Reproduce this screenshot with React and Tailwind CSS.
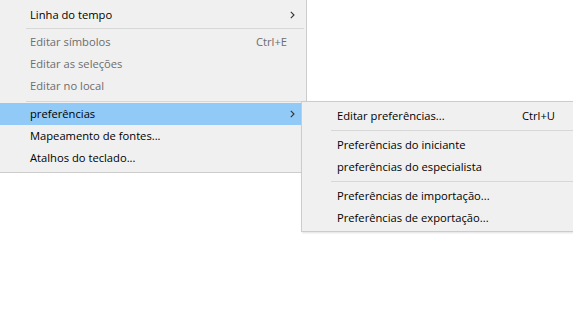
import React from "react";

const Chevron = () => (
  <svg width="5" height="8" viewBox="0 0 5 8" className="shrink-0">
    <path d="M0.8 0.8 L4 4 L0.8 7.2" fill="none" stroke="#333" strokeWidth="1.1" />
  </svg>
);

const Row = ({ label, shortcut, arrow, disabled, active }) => (
  <div
    className={`flex items-center h-[22px] pl-[30px] pr-[11px] ${active ? "bg-[#91c9f7]" : ""} ${disabled ? "text-[#6d6d6d]" : "text-black"}`}
  >
    <span className="flex-1 whitespace-nowrap">{label}</span>
    {shortcut && <span className="whitespace-nowrap mr-[8px]">{shortcut}</span>}
    {arrow && <Chevron />}
  </div>
);

const SubRow = ({ label, shortcut }) => (
  <div className="flex items-center h-[22px] pl-[35px] pr-[35px] text-black">
    <span className="flex-1 whitespace-nowrap">{label}</span>
    {shortcut && <span className="whitespace-nowrap">{shortcut}</span>}
  </div>
);

export default function App() {
  return (
    <div
      className="relative w-[573px] h-[320px] bg-white overflow-hidden text-[11.2px] leading-none"
      style={{ fontFamily: '"Open Sans", "Noto Sans", sans-serif' }}
    >
      <div className="w-[307px] bg-[#f0f0f0] border-r border-b border-[#cccccc] pt-[4px] pb-[3px]">
        <Row label="Linha do tempo" arrow />
        <div className="ml-[26px] mr-[2px] h-px bg-[#d7d7d7] mt-[2px] mb-[2px]" />
        <Row label="Editar símbolos" shortcut="Ctrl+E" disabled />
        <Row label="Editar as seleções" disabled />
        <Row label="Editar no local" disabled />
        <div className="ml-[26px] mr-[2px] h-px bg-[#d7d7d7] mt-[4px] mb-[1px]" />
        <Row label="preferências" arrow active />
        <Row label="Mapeamento de fontes..." />
        <Row label="Atalhos do teclado..." />
      </div>

      <div className="absolute left-[301px] top-[101px] w-[290px] bg-[#f0f0f0] border border-[#cccccc] pt-[3px] pb-[2px] shadow-[1px_1px_2px_rgba(0,0,0,0.12)]">
        <SubRow label="Editar preferências..." shortcut="Ctrl+U" />
        <div className="ml-[29px] h-px bg-[#d7d7d7] mt-[3px] mb-[3px]" />
        <SubRow label="Preferências do iniciante" />
        <SubRow label="preferências do especialista" />
        <div className="ml-[29px] h-px bg-[#d7d7d7] mt-[3px] mb-[3px]" />
        <SubRow label="Preferências de importação..." />
        <SubRow label="Preferências de exportação..." />
      </div>
    </div>
  );
}
